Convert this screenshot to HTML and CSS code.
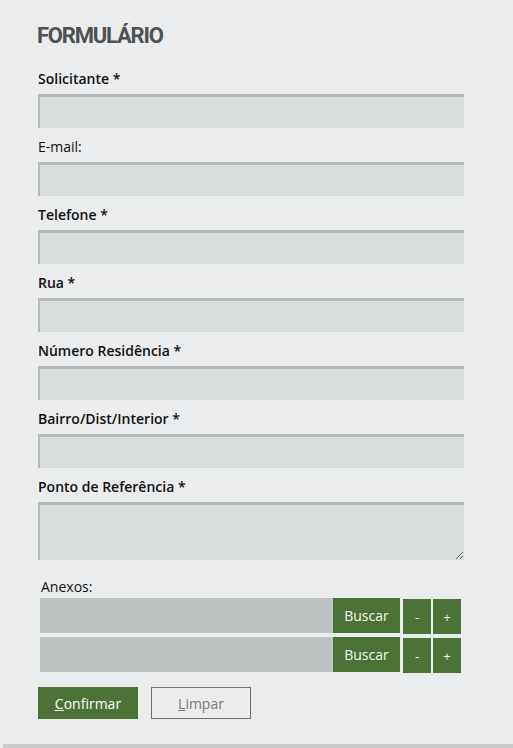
FILE: index.html
```html
<!DOCTYPE html>
<html lang="pt-BR">
<head>
<meta charset="utf-8">
<title>Formulário</title>
<link rel="stylesheet" href="styles.css">
</head>
<body>
<div class="page">
  <h1 class="title">FORMULÁRIO</h1>
  <form class="form">
    <div class="field">
      <label class="label req">Solicitante *</label>
      <input class="input" type="text">
    </div>
    <div class="field">
      <label class="label">E-mail:</label>
      <input class="input" type="text">
    </div>
    <div class="field">
      <label class="label req">Telefone *</label>
      <input class="input" type="text">
    </div>
    <div class="field">
      <label class="label req">Rua *</label>
      <input class="input" type="text">
    </div>
    <div class="field">
      <label class="label req">Número Residência *</label>
      <input class="input" type="text">
    </div>
    <div class="field">
      <label class="label req">Bairro/Dist/Interior *</label>
      <input class="input" type="text">
    </div>
    <div class="field">
      <label class="label req">Ponto de Referência *</label>
      <textarea class="input textarea"></textarea>
    </div>
    <div class="attachments">
      <div class="att-label">Anexos:</div>
      <div class="att-row">
        <div class="file-box"></div>
        <button type="button" class="btn-green buscar">Buscar</button>
        <button type="button" class="btn-green small">-</button>
        <button type="button" class="btn-green small">+</button>
      </div>
      <div class="att-row">
        <div class="file-box"></div>
        <button type="button" class="btn-green buscar">Buscar</button>
        <button type="button" class="btn-green small">-</button>
        <button type="button" class="btn-green small">+</button>
      </div>
    </div>
    <div class="actions">
      <button type="button" class="btn-confirm"><u>C</u>onfirmar</button>
      <button type="button" class="btn-clear"><u>L</u>impar</button>
    </div>
  </form>
</div>
<div class="bottom-bar"></div>
</body>
</html>
```

FILE: styles.css
```css
html, body {
  margin: 0;
  padding: 0;
  background: #ebeced;
}
body {
  font-family: "Open Sans", "Liberation Sans", sans-serif;
  color: #1a1a1a;
  height: 748px;
  overflow: hidden;
}
.page {
  padding: 23px 49px 25px 38px;
}
.title {
  margin: 0 0 21px -1px;
  font-family: Roboto, "Liberation Sans", sans-serif;
  font-weight: 700;
  font-size: 22px;
  line-height: 26px;
  letter-spacing: -1.2px;
  color: #4f5152;
}
.form {
  display: flex;
  flex-direction: column;
}
.field {
  display: flex;
  flex-direction: column;
  margin-bottom: 10px;
}
.label {
  display: block;
  font-size: 14px;
  line-height: 18px;
  margin-bottom: 6px;
  color: #111;
}
.label.req {
  font-weight: 600;
}
.input {
  box-sizing: border-box;
  width: 426px;
  height: 34px;
  margin: 0;
  padding: 0 6px;
  border: none;
  border-top: 3px solid #b6b8b9;
  border-left: 2px solid #b6b8b9;
  background: #d9dcdd;
  font-family: inherit;
  font-size: 13px;
  outline: none;
}
.textarea {
  height: 58px;
  resize: vertical;
  display: block;
}
.attachments {
  margin-top: 8px;
  padding-left: 2px;
}
.att-label {
  font-size: 14px;
  line-height: 18px;
  padding-left: 1px;
  margin-bottom: 2px;
  color: #111;
}
.att-row {
  display: flex;
  align-items: flex-start;
  height: 35px;
  margin-bottom: 4px;
}
.file-box {
  width: 293px;
  height: 35px;
  background: #bfc2c3;
}
.btn-green {
  box-sizing: border-box;
  border: none;
  margin: 0;
  padding: 0;
  background: #4b7338;
  color: #f3f7ee;
  font-family: "Open Sans", "Liberation Sans", sans-serif;
  cursor: pointer;
}
.buscar {
  width: 67px;
  height: 35px;
  font-size: 14px;
}
.small {
  width: 28px;
  height: 35px;
  margin-top: 1px;
  margin-left: 3px;
  font-size: 13px;
}
.small + .small {
  margin-left: 2px;
}
.actions {
  display: flex;
  gap: 13px;
  margin-top: 11px;
}
.btn-confirm {
  box-sizing: border-box;
  width: 100px;
  height: 32px;
  border: none;
  background: #4b7338;
  color: #fff;
  font-family: "Open Sans", "Liberation Sans", sans-serif;
  font-size: 14px;
  padding: 0;
}
.btn-clear {
  box-sizing: border-box;
  width: 100px;
  height: 32px;
  border: 1px solid #6f6f6f;
  background: transparent;
  color: #7a7a7a;
  font-family: "Open Sans", "Liberation Sans", sans-serif;
  font-size: 14px;
  padding: 0;
}
.btn-confirm u, .btn-clear u {
  text-decoration-thickness: 1px;
}
.bottom-bar {
  margin-left: 3px;
  height: 4px;
  background: #c9cacb;
}
```
